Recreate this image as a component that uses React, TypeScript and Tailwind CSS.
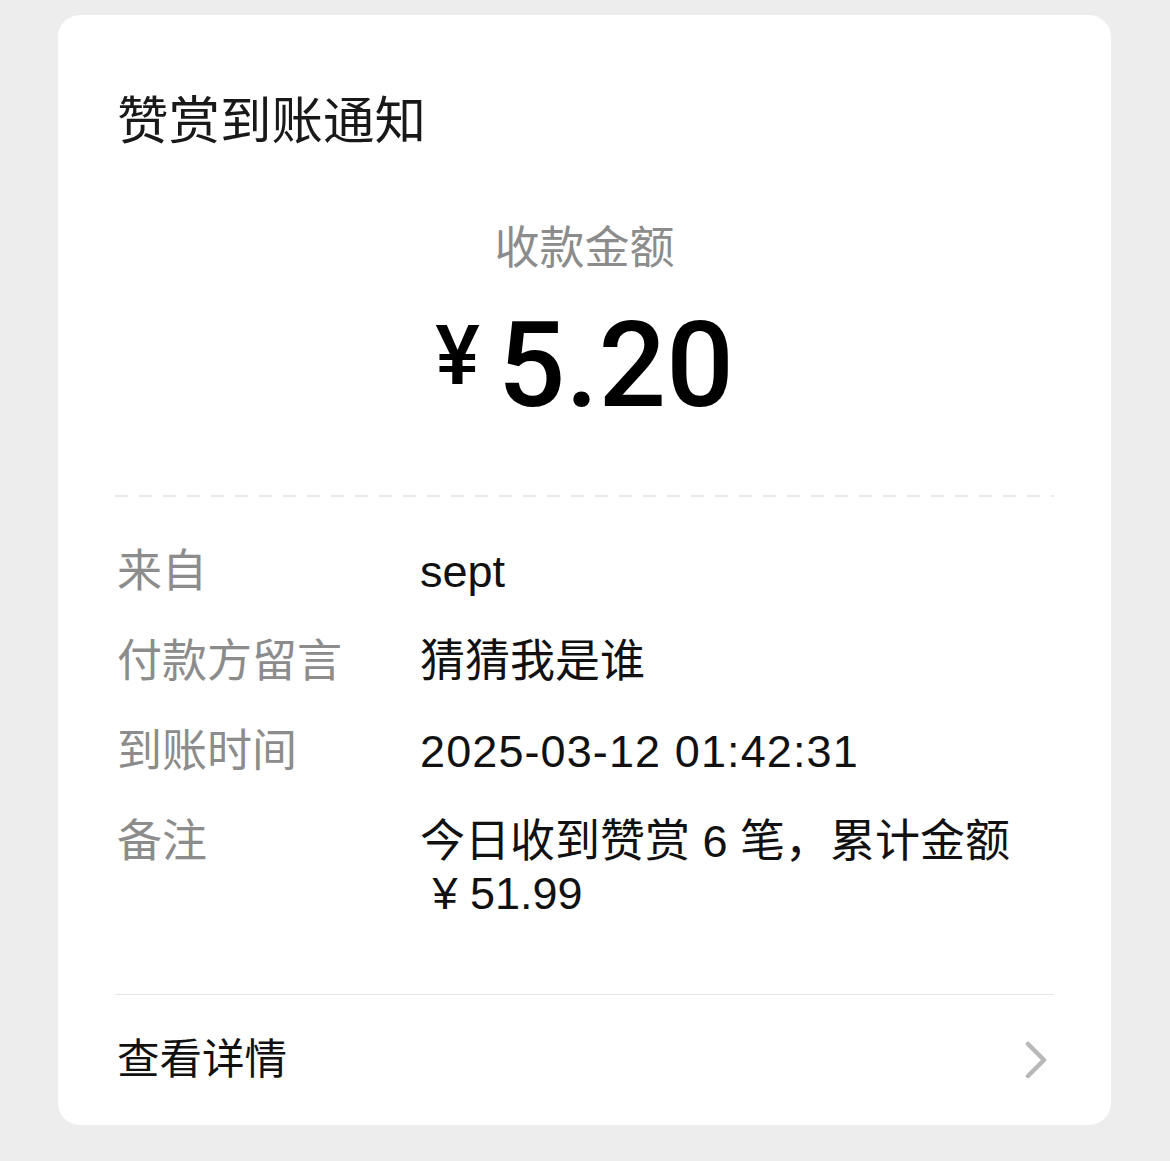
const ROWS: { label: string; value: string; wide?: boolean }[] = [
  { label: "来自", value: "sept" },
  { label: "付款方留言", value: "猜猜我是谁" },
  { label: "到账时间", value: "2025-03-12 01:42:31", wide: true },
  { label: "备注", value: "今日收到赞赏 6 笔，累计金额 \u00a0¥\u00a051.99" },
];

export default function App() {
  return (
    <div className="min-h-[1161px] bg-[#ededed] pt-[15px] pl-[58px] pr-[59px] font-['Liberation_Sans','Noto_Sans_CJK_SC',sans-serif]">
      <div className="rounded-[22px] bg-white px-[57px] pt-[71px]">
        <h1 className="pl-[2px] text-[51.5px] leading-[70px] font-normal text-[#191919]">
          赞赏到账通知
        </h1>

        <div className="mt-[63px] text-center text-[45px] leading-[60px] text-[#8c8c8c]">
          收款金额
        </div>

        <div className="mt-[27px] flex items-start justify-center font-['Roboto',sans-serif] font-medium text-black">
          <span className="mt-[8px] mr-[18px] text-[84px] leading-none">¥</span>
          <span className="text-[119px] leading-[120px]">5.20</span>
        </div>

        <div className="mt-[69px] h-[2px] bg-[repeating-linear-gradient(to_right,#e8e8e8_0_13px,transparent_13px_24px)]" />

        <dl className="mt-[49px] flex flex-col gap-[38px]">
          {ROWS.map((r) => (
            <div key={r.label} className="flex text-[45px] leading-[52px]">
              <dt className="w-[305px] shrink-0 pl-[2px] text-[#8c8c8c]">{r.label}</dt>
              <dd
                className={
                  r.wide
                    ? "min-w-0 flex-1 tracking-[1.1px] text-[#111111]"
                    : "min-w-0 flex-1 text-[#111111]"
                }
              >
                {r.value}
              </dd>
            </div>
          ))}
        </dl>

        <div className="mt-[74px] h-px bg-[#e6e6e6]" />

        <div className="flex h-[130px] items-center justify-between">
          <span className="pl-[2px] text-[42.5px] text-[#111111]">查看详情</span>
          <svg
            viewBox="0 0 22 38"
            className="mr-[7px] h-[38px] w-[22px]"
            fill="none"
            stroke="#b8b8b8"
            strokeWidth="4.5"
            strokeLinecap="round"
            strokeLinejoin="round"
            aria-hidden
          >
            <polyline points="3,3 19,19 3,35" />
          </svg>
        </div>
      </div>
    </div>
  );
}
